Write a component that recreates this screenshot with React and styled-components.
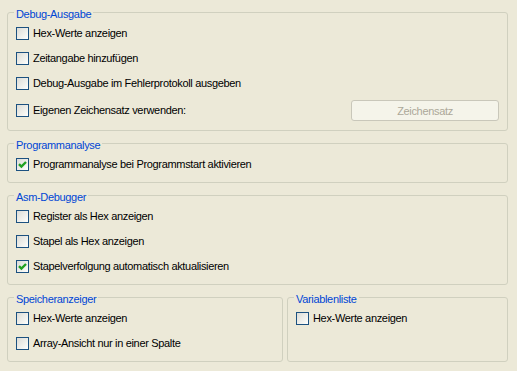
import React from "react";
import styled, { createGlobalStyle } from "styled-components";

const GlobalStyle = createGlobalStyle`
  html, body {
    margin: 0;
    padding: 0;
    background: #ece9d8;
  }
  body {
    font-family: "Liberation Sans", Arial, sans-serif;
    font-size: 11px;
    letter-spacing: -0.33px;
    color: #000;
  }
`;

const Page = styled.div`
  width: 517px;
  height: 371px;
  box-sizing: border-box;
  padding: 4px 9px 0 7px;
  display: flex;
  flex-direction: column;
  gap: 4px;
`;

const Group = styled.fieldset`
  margin: 0;
  min-width: 0;
  padding: 4px 8px 9px 8px;
  border: 1px solid #d0d0bf;
  border-radius: 3px;
  display: flex;
  flex-direction: column;
  gap: 8px;
`;

const Legend = styled.legend`
  margin-left: -2px;
  padding: 4px 2px 0 2px;
  line-height: 13px;
  color: #0046d5;
`;

const Row = styled.div`
  display: flex;
  align-items: center;
  justify-content: space-between;
  min-height: ${(p) => (p.$tall ? "21px" : "17px")};
`;

const Label = styled.label`
  display: flex;
  align-items: center;
  gap: 4px;
  line-height: 13px;
  white-space: nowrap;
`;

const Box = styled.span`
  width: 11px;
  height: 11px;
  border: 1px solid #1c5180;
  background: linear-gradient(135deg, #dcdcd7 0%, #f4f4f0 70%, #ffffff 100%);
  display: flex;
  align-items: center;
  justify-content: center;
  flex: none;
`;

const Button = styled.button`
  width: 148px;
  height: 21px;
  box-sizing: border-box;
  border: 1px solid #c9c7ba;
  border-radius: 3px;
  background: #f5f4ea;
  color: #aca899;
  font-family: inherit;
  font-size: 11px;
  letter-spacing: inherit;
  padding: 0;
`;

const Columns = styled.div`
  display: grid;
  grid-template-columns: 276px 1fr;
  gap: 4px;
`;

const Check = ({ checked, children }) => (
  <Label>
    <Box>
      {checked && (
        <svg width="9" height="9" viewBox="0 0 9 9">
          <path
            d="M1 4.2 L3.4 6.6 L8 2"
            fill="none"
            stroke="#21a121"
            strokeWidth="2.4"
          />
        </svg>
      )}
    </Box>
    {children}
  </Label>
);

export default function App() {
  return (
    <Page>
      <GlobalStyle />
      <Group>
        <Legend>Debug-Ausgabe</Legend>
        <Row>
          <Check>Hex-Werte anzeigen</Check>
        </Row>
        <Row>
          <Check>Zeitangabe hinzufügen</Check>
        </Row>
        <Row>
          <Check>Debug-Ausgabe im Fehlerprotokoll ausgeben</Check>
        </Row>
        <Row $tall>
          <Check>Eigenen Zeichensatz verwenden:</Check>
          <Button disabled>Zeichensatz</Button>
        </Row>
      </Group>

      <Group>
        <Legend>Programmanalyse</Legend>
        <Row>
          <Check checked>Programmanalyse bei Programmstart aktivieren</Check>
        </Row>
      </Group>

      <Group>
        <Legend>Asm-Debugger</Legend>
        <Row>
          <Check>Register als Hex anzeigen</Check>
        </Row>
        <Row>
          <Check>Stapel als Hex anzeigen</Check>
        </Row>
        <Row>
          <Check checked>Stapelverfolgung automatisch aktualisieren</Check>
        </Row>
      </Group>

      <Columns>
        <Group>
          <Legend>Speicheranzeiger</Legend>
          <Row>
            <Check>Hex-Werte anzeigen</Check>
          </Row>
          <Row>
            <Check>Array-Ansicht nur in einer Spalte</Check>
          </Row>
        </Group>
        <Group>
          <Legend>Variablenliste</Legend>
          <Row>
            <Check>Hex-Werte anzeigen</Check>
          </Row>
        </Group>
      </Columns>
    </Page>
  );
}
